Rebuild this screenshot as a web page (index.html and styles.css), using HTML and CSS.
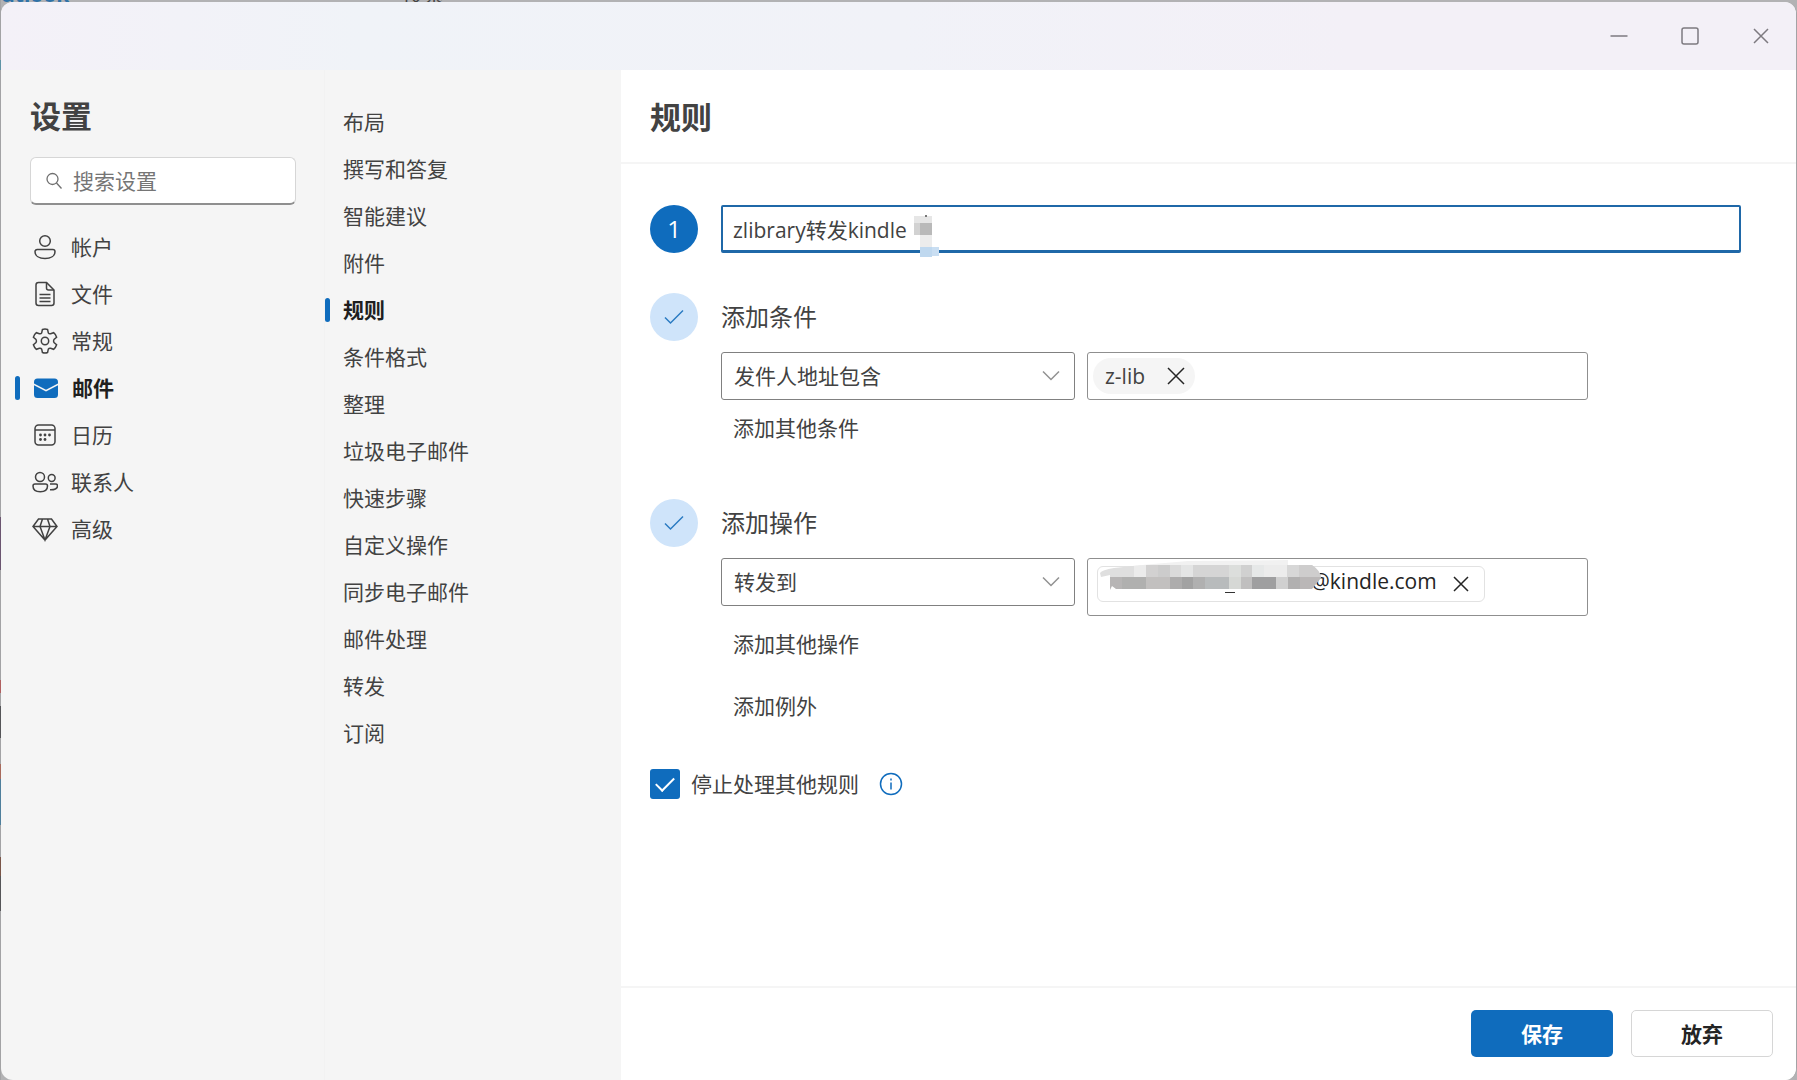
FILE: index.html
```html
<!DOCTYPE html>
<html lang="zh-CN">
<head>
    <meta charset="UTF-8">
    <title>设置</title>
    <link rel="stylesheet" href="styles.css">
</head>
<body>
<!-- edge of the app that lies behind the settings window -->
<div class="backdrop"><b>utlook</b><span>搜索</span></div>
<div class="window">
    <div class="titlebar">
        <button class="win-btn" aria-label="最小化"><svg width="18" height="18" viewBox="0 0 18 18"><path d="M0.5 9h17"/></svg></button>
        <button class="win-btn" aria-label="最大化"><svg width="18" height="18" viewBox="0 0 18 18"><rect x="1" y="1" width="16" height="16" rx="2"/></svg></button>
        <button class="win-btn" aria-label="关闭"><svg width="18" height="18" viewBox="0 0 18 18"><path d="M2 2l14 14M16 2L2 16"/></svg></button>
    </div>
    <div class="layout">
        <aside class="sidebar">
            <h1>设置</h1>
            <div class="search">
                <svg width="18" height="18" viewBox="0 0 18 18"><circle cx="7.5" cy="7" r="5.5"/><path d="M11.5 11l5 5.5"/></svg>
                <input type="text" aria-label="搜索设置" placeholder="搜索设置">
            </div>
            <nav class="menu">
                <a href="#">
                    <svg width="26" height="26" viewBox="0 0 26 26"><circle cx="13" cy="7" r="5.3"/><path d="M5.2 15.5h15.6a2.2 2.2 0 0 1 2.2 2.2c0 4.300-4.300 6.800-10 6.800s-10-2.500-10-6.800a2.200 2.200 0 0 1 2.200-2.200z"/></svg>
                    帐户
                </a>
                <a href="#">
                    <svg width="26" height="26" viewBox="0 0 26 26"><path d="M6.500 1.500h8l7.500 7.500v13a2.500 2.500 0 0 1-2.500 2.500h-13a2.500 2.500 0 0 1-2.500-2.500v-18a2.500 2.500 0 0 1 2.500-2.500z"/><path d="M14.500 1.500v5.500a2 2 0 0 0 2 2h5.500M7.500 13.500h11M7.500 17h11M7.500 20.500h11"/></svg>
                    文件
                </a>
                <a href="#">
                    <svg width="26" height="26" viewBox="0 0 26 26"><circle cx="13" cy="13" r="3.700"/><path d="M10.400 1.500Q13 0.500 15.600 1.500L16.300 4.800Q17 6 18.600 5.700L21.600 4.700Q23.800 6.500 24.600 9.200L22 11.500Q21.200 13 22 14.500L24.600 16.800Q23.800 19.500 21.600 21.300L18.600 20.300Q17 20 16.300 21.200L15.600 24.500Q13 25.500 10.400 24.500L9.700 21.200Q9 20 7.400 20.300L4.400 21.300Q2.200 19.500 1.400 16.800L4 14.500Q4.800 13 4 11.500L1.400 9.200Q2.200 6.500 4.400 4.700L7.400 5.700Q9 6 9.700 4.800Z"/></svg>
                    常规
                </a>
                <a href="#" class="active">
                    <svg width="26" height="26" viewBox="0 0 26 26"><path class="fill" d="M1 8.500V7a3.500 3.500 0 0 1 3.500-3.500h17A3.500 3.500 0 0 1 25 7v1.500l-12 6.300z"/><path class="fill" d="M1 10.300l12 6.300 12-6.300v9.200a3.500 3.500 0 0 1-3.500 3.500h-17a3.500 3.500 0 0 1-3.500-3.500z"/></svg>
                    邮件
                </a>
                <a href="#">
                    <svg width="26" height="26" viewBox="0 0 26 26"><rect x="3" y="3" width="20" height="20" rx="3.500"/><path d="M3 8h20"/><g class="dots"><circle cx="8.500" cy="13" r="1.400"/><circle cx="13" cy="13" r="1.400"/><circle cx="17.500" cy="13" r="1.400"/><circle cx="8.500" cy="17.500" r="1.400"/><circle cx="13" cy="17.500" r="1.400"/></g></svg>
                    日历
                </a>
                <a href="#">
                    <svg width="26" height="26" viewBox="0 0 26 26"><circle cx="8" cy="8" r="4.500"/><circle cx="19.700" cy="9" r="3.400"/><path d="M3 15h10.500a2 2 0 0 1 2 2c0 3.700-3 5.700-7.200 5.700S1 20.700 1 17a2 2 0 0 1 2-2zM18 15h5.500a2 2 0 0 1 2 2c0 2.800-3.200 4-7.500 3.800"/></svg>
                    联系人
                </a>
                <a href="#">
                    <svg width="26" height="26" viewBox="0 0 26 26"><path d="M6.500 3h13L25 10.500 13 24 1 10.500zM1 10.500h24M10.500 3l-2.500 7.500L13 24l5-13.500L15.500 3"/></svg>
                    高级
                </a>
            </nav>
        </aside>
        <nav class="submenu">
            <a href="#">布局</a>
            <a href="#">撰写和答复</a>
            <a href="#">智能建议</a>
            <a href="#">附件</a>
            <a href="#" class="active">规则</a>
            <a href="#">条件格式</a>
            <a href="#">整理</a>
            <a href="#">垃圾电子邮件</a>
            <a href="#">快速步骤</a>
            <a href="#">自定义操作</a>
            <a href="#">同步电子邮件</a>
            <a href="#">邮件处理</a>
            <a href="#">转发</a>
            <a href="#">订阅</a>
        </nav>
        <main class="content">
            <header class="content-header"><h2>规则</h2></header>
            <form class="rule-form">
                <section class="step step-name">
                    <span class="badge">1</span>
                    <div class="name-field">
                        <input type="text" aria-label="规则名称" value="zlibrary转发kindle">
                        <svg class="name-mask" width="26" height="42" viewBox="0 0 26 42" shape-rendering="crispEdges">
                            <rect x="0" y="1" width="18" height="7" fill="#e6e6e6"/>
                            <rect x="11" y="0" width="2" height="2" fill="#777777"/>
                            <rect x="0" y="8" width="6" height="12" fill="#d2d2d2"/>
                            <rect x="6" y="8" width="12" height="12" fill="#b9b9b9"/>
                            <rect x="6" y="20" width="12" height="12" fill="#ececec"/>
                            <rect x="6" y="32" width="12" height="10" fill="#bfd8ef"/>
                            <rect x="18" y="32" width="7" height="9" fill="#c9def2"/>
                        </svg>
                    </div>
                </section>
                <section class="step">
                    <span class="badge done"><svg width="20" height="16" viewBox="0 0 20 16"><path d="M1 8.500l5.500 5.500L19 1.500"/></svg></span>
                    <div class="step-body">
                        <h3>添加条件</h3>
                        <div class="fields">
                            <div class="select">
                                <select aria-label="条件"><option>发件人地址包含</option></select>
                                <svg width="18" height="12" viewBox="0 0 18 12"><path d="M1 1.500l8 8 8-8"/></svg>
                            </div>
                            <div class="tag-box">
                                <span class="pill">z-lib<button type="button" aria-label="删除 z-lib"><svg width="18" height="18" viewBox="0 0 18 18"><path d="M1 1l16 16M17 1L1 17"/></svg></button></span>
                            </div>
                        </div>
                        <a href="#" class="add-link">添加其他条件</a>
                    </div>
                </section>
                <section class="step">
                    <span class="badge done"><svg width="20" height="16" viewBox="0 0 20 16"><path d="M1 8.500l5.500 5.500L19 1.500"/></svg></span>
                    <div class="step-body">
                        <h3>添加操作</h3>
                        <div class="fields">
                            <div class="select">
                                <select aria-label="操作"><option>转发到</option></select>
                                <svg width="18" height="12" viewBox="0 0 18 12"><path d="M1 1.500l8 8 8-8"/></svg>
                            </div>
                            <div class="tag-box people">
                                <span class="person">
                                    <span>@kindle.com</span>
                                    <button type="button" aria-label="删除收件人"><svg width="16" height="16" viewBox="0 0 16 16"><path d="M1 1l14 14M15 1L1 15"/></svg></button>
                                    <svg class="mail-mask" width="222" height="36" viewBox="0 0 222 36">
                                        <defs><clipPath id="smear"><path d="M0 14Q2 11 14 9L42 6 88 2 188 1 188 6 212 6Q221 12 221 19L212 30H16L12 27 10 31V16L1 18z"/></clipPath></defs>
                                        <g clip-path="url(#smear)" shape-rendering="crispEdges">
                                            <rect width="222" height="7" fill="#f1f1f1"/>
                                            <rect y="6" width="34" height="12" fill="#dfdfdf"/>
                                            <rect x="34" y="6" width="12" height="12" fill="#ebebeb"/>
                                            <rect x="46" y="6" width="12" height="12" fill="#d2d1d1"/>
                                            <rect x="58" y="6" width="12" height="12" fill="#cccccc"/>
                                            <rect x="70" y="6" width="11" height="12" fill="#dadada"/>
                                            <rect x="81" y="6" width="12" height="12" fill="#e4e5e5"/>
                                            <rect x="93" y="6" width="36" height="12" fill="#d5d5d5"/>
                                            <rect x="129" y="6" width="12" height="12" fill="#dcdedc"/>
                                            <rect x="141" y="6" width="11" height="12" fill="#d0d0d0"/>
                                            <rect x="152" y="6" width="12" height="12" fill="#e6e8e8"/>
                                            <rect x="164" y="6" width="23" height="12" fill="#ececec"/>
                                            <rect x="187" y="6" width="12" height="12" fill="#d7d7d7"/>
                                            <rect x="199" y="6" width="23" height="12" fill="#cecdcd"/>
                                            <rect x="10" y="18" width="12" height="13" fill="#b7b5b5"/>
                                            <rect x="22" y="18" width="24" height="13" fill="#b0b0af"/>
                                            <rect x="46" y="18" width="24" height="13" fill="#c2c0bf"/>
                                            <rect x="70" y="18" width="12" height="13" fill="#adacac"/>
                                            <rect x="82" y="18" width="11" height="13" fill="#a2a2a2"/>
                                            <rect x="93" y="18" width="12" height="13" fill="#b0b0b0"/>
                                            <rect x="105" y="18" width="24" height="13" fill="#b8bbbc"/>
                                            <rect x="129" y="18" width="12" height="13" fill="#d6d8d5"/>
                                            <rect x="141" y="18" width="11" height="13" fill="#c0bfbf"/>
                                            <rect x="152" y="18" width="24" height="13" fill="#9f9fa0"/>
                                            <rect x="176" y="18" width="12" height="13" fill="#d0d0d0"/>
                                            <rect x="188" y="18" width="12" height="13" fill="#b1b0b0"/>
                                            <rect x="200" y="18" width="22" height="13" fill="#bab7b7"/>
                                        </g>
                                        <path d="M125 33.500h10" stroke="#333333" stroke-width="1"/>
                                    </svg>
                                </span>
                            </div>
                        </div>
                        <a href="#" class="add-link">添加其他操作</a>
                        <a href="#" class="add-link exception">添加例外</a>
                    </div>
                </section>
                <div class="stop-row">
                    <input type="checkbox" id="stop" checked>
                    <label for="stop">停止处理其他规则</label>
                    <button type="button" class="info" aria-label="详细信息"><svg width="24" height="24" viewBox="0 0 24 24"><circle cx="12" cy="12" r="10.500"/><path d="M12 10.500v7M12 6.500v2"/></svg></button>
                </div>
            </form>
            <footer class="actions">
                <button class="save">保存</button>
                <button class="discard">放弃</button>
            </footer>
        </main>
    </div>
</div>
</body>
</html>
```
FILE: styles.css
```css
* {
    box-sizing: border-box;
}

body {
    margin: 0;
    min-height: 100vh;
    display: flex;
    flex-direction: column;
    padding-left: 1px;
    background: #b2b2b4 linear-gradient(#a3a3a5 60px, #5f93a6 60px 70px, #a3a3a5 70px 517px, #6b5570 517px 570px, #a3a3a5 570px 680px, #b06060 680px 693px, #a3a3a5 693px 706px, #555558 706px 738px, #a3a3a5 738px 764px, #a86a5c 764px 779px, #4f7f9c 779px 825px, #a3a3a5 825px 857px, #7a5548 857px 876px, #555558 876px 911px, #a3a3a5 911px) 0 0 / 1px 100% no-repeat;
    font-family: "Open Sans", "Noto Sans CJK SC", sans-serif;
    font-size: 21px;
    line-height: 30px;
    color: #424242;
}

h1, h2, h3 {
    margin: 0;
}

h1, h2 {
    font-size: 31px;
    line-height: 46px;
    font-weight: bold;
}

h3 {
    font-size: 24px;
    line-height: 48px;
    font-weight: normal;
}

a {
    color: inherit;
    text-decoration: none;
}

button, input, select {
    font: inherit;
    color: inherit;
}

button {
    padding: 0;
    border: none;
    background: none;
}

svg {
    flex: none;
    fill: none;
    stroke: currentColor;
    stroke-width: 1.5;
}

.backdrop {
    display: flex;
    align-items: flex-end;
    gap: 333px;
    height: 2px;
    overflow: hidden;
    line-height: 16px;
    color: #444444;
}

.backdrop b {
    color: #2f72a8;
}

.window {
    flex: 1;
    display: flex;
    flex-direction: column;
    border-right: 1px solid #a3a3a5;
    border-radius: 12px;
    overflow: hidden;
    background-color: #f5f5f5;
}

.titlebar {
    display: flex;
    justify-content: flex-end;
    height: 68px;
    background: linear-gradient(to right, #f4f1f8, #f0f3f8 20%, #f1f2f8 50%, #f3f0f7 75%);
}

.win-btn {
    display: grid;
    place-items: center;
    width: 71px;
    color: #7d7a80;
}

.layout {
    flex: 1;
    display: flex;
}

/* left column */
.sidebar {
    width: 324px;
    padding: 23px 28px 0 14px;
    border-right: 1px solid #f2f2f2;
}

.sidebar h1 {
    padding-left: 15px;
}

.search {
    display: flex;
    align-items: center;
    gap: 10px;
    height: 48px;
    margin: 18px 0 18px 15px;
    padding-left: 14px;
    border: 1px solid #d6d6d6;
    border-bottom: 2px solid #8f8f8f;
    border-radius: 6px;
    background-color: #ffffff;
    color: #707070;
}

.search svg {
    stroke-width: 1.3;
}

.search input {
    flex: 1;
    min-width: 0;
    padding: 0;
    border: none;
    outline: none;
    background: none;
}

.search input::placeholder {
    color: #757575;
    opacity: 1;
}

.menu a, .submenu a {
    display: flex;
    align-items: center;
    height: 47px;
}

.menu a {
    gap: 13px;
    padding-left: 17px;
}

.active {
    font-weight: bold;
    color: #1f1f1f;
}

.active::before {
    content: "";
    width: 5px;
    height: 24px;
    border-radius: 3px;
    background-color: #0f6cbd;
}

.menu .active {
    padding-left: 0;
}

.fill {
    fill: #0f6cbd;
    stroke: none;
}

.dots {
    fill: currentColor;
    stroke: none;
}

/* second column */
.submenu {
    width: 296px;
    padding-top: 28px;
}

.submenu a {
    padding-left: 18px;
}

.submenu .active {
    gap: 13px;
    padding-left: 0;
}

/* rule editor */
.content {
    flex: 1;
    display: flex;
    flex-direction: column;
    background-color: #ffffff;
}

.content-header {
    padding: 24px 29px 22px;
    border-bottom: 2px solid #f5f5f5;
}

.rule-form {
    flex: 1;
    padding: 41px 55px 0 29px;
}

.step {
    display: flex;
    gap: 23px;
    margin-bottom: 56px;
}

.step-name {
    margin-bottom: 40px;
}

.badge {
    flex: none;
    display: grid;
    place-items: center;
    width: 48px;
    height: 48px;
    border-radius: 50%;
    background-color: #0f6cbd;
    font-size: 24px;
    color: #ffffff;
}

.badge.done {
    background-color: #cfe4fa;
    color: #2b7bc2;
}

.name-field {
    flex: 1;
    position: relative;
}

.name-field input {
    width: 100%;
    height: 48px;
    padding: 0 10px;
    border: 2px solid #1f68a8;
    border-bottom-width: 3px;
    border-radius: 2px;
    outline: none;
}

.name-mask {
    position: absolute;
    left: 193px;
    top: 10px;
    stroke: none;
}

.step-body {
    flex: 1;
}

.fields {
    display: grid;
    grid-template-columns: 354fr 501fr;
    align-items: start;
    gap: 12px;
    width: 85%;
    margin: 11px 0 13px;
}

.select {
    position: relative;
}

.select select {
    display: block;
    appearance: none;
    width: 100%;
    height: 48px;
    padding: 0 48px 0 12px;
    border: 1px solid #808080;
    border-radius: 3px;
    background-color: #ffffff;
}

.select svg {
    position: absolute;
    right: 15px;
    top: 18px;
    color: #919191;
    pointer-events: none;
}

.tag-box {
    display: flex;
    align-items: flex-start;
    min-height: 48px;
    padding: 5px;
    border: 1px solid #8f8f8f;
    border-radius: 3px;
}

.people {
    min-height: 58px;
    padding: 7px 9px;
}

.pill {
    display: flex;
    align-items: center;
    gap: 22px;
    height: 36px;
    padding: 0 10px 0 12px;
    border-radius: 18px;
    background-color: #f5f5f5;
}

.pill button, .person button {
    display: flex;
}

.pill button {
    color: #242424;
}

.person {
    position: relative;
    display: flex;
    align-items: center;
    gap: 16px;
    height: 36px;
    padding: 0 15px 0 213px;
    border: 1px solid #e2e2e2;
    border-radius: 6px;
    color: #242424;
}

.person span {
    line-height: 28px;
    padding-bottom: 7px;
}

.mail-mask {
    position: absolute;
    left: 2px;
    top: -8px;
    stroke: none;
}

.add-link {
    display: block;
    width: fit-content;
    margin-left: 12px;
}

.exception {
    margin-top: 32px;
}

.stop-row {
    display: flex;
    align-items: center;
    margin-top: -8px;
}

.stop-row input {
    appearance: none;
    width: 30px;
    height: 30px;
    margin: 0 11px 0 0;
    border-radius: 3px;
    background: #0f6cbd;
    display: grid;
    place-items: center;
}

.stop-row input:checked::before {
    content: "";
    width: 16px;
    height: 8px;
    margin-bottom: 5px;
    border: solid #ffffff;
    border-width: 0 0 2px 2px;
    transform: rotate(-45deg);
}

.info {
    display: flex;
    margin-left: 20px;
    color: #0f6cbd;
}

.actions {
    display: flex;
    justify-content: flex-end;
    gap: 18px;
    padding: 22px 23px 23px;
    border-top: 2px solid #f5f5f5;
}

.actions button {
    width: 142px;
    height: 47px;
    border-radius: 5px;
    font-weight: bold;
}

.save {
    background-color: #0f6cbd;
    color: #ffffff;
}

.discard {
    border: 1px solid #d6d6d6;
    background-color: #ffffff;
    color: #242424;
}
```
